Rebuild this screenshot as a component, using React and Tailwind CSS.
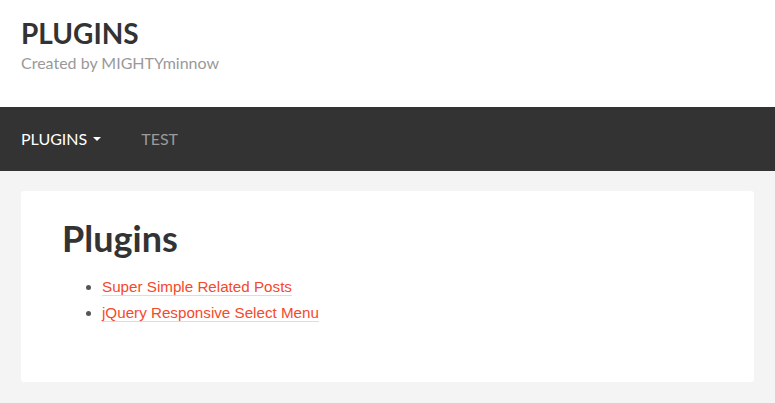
export default function App() {
  return (
    <div className="min-h-[403px] bg-[#f4f4f4]" style={{ fontFamily: "Lato, 'Liberation Sans', sans-serif" }}>
      <header className="bg-white h-[107px] px-[21px] pt-[16px]">
        <h1 className="text-[28px] leading-[34px] font-bold text-[#333]">PLUGINS</h1>
        <p className="mt-[3px] text-[16px] leading-[19px] text-[#999]">Created by MIGHTYminnow</p>
      </header>
      <nav className="bg-[#333333] h-[64px] px-[21px] flex items-center">
        <div className="flex items-center text-white text-[16px]">
          <span>PLUGINS</span>
          <svg width="8" height="5" viewBox="0 0 8 5" className="ml-[6px]">
            <path d="M0 0 L8 0 L4 4 Z" fill="#fff" />
          </svg>
        </div>
        <span className="ml-[40px] text-[16px] text-[#9a9a9a]">TEST</span>
      </nav>
      <main className="px-[21px] pt-[20px] pb-[22px]">
        <div className="bg-white rounded-[3px] pl-[41px] pt-[24px] pb-[56px]">
          <h2 className="text-[36px] leading-[46px] font-bold text-[#333]">Plugins</h2>
          <ul className="mt-[13px] list-disc pl-[40px] text-[#555] text-[15.2px] leading-[26px]" style={{ fontFamily: "'Liberation Sans', Arial, sans-serif" }}>
            <li><a className="text-[#f5492b] border-b border-[#dddddd]" href="#">Super Simple Related Posts</a></li>
            <li><a className="text-[#f5492b] border-b border-[#dddddd]" href="#">jQuery Responsive Select Menu</a></li>
          </ul>
        </div>
      </main>
    </div>
  );
}
